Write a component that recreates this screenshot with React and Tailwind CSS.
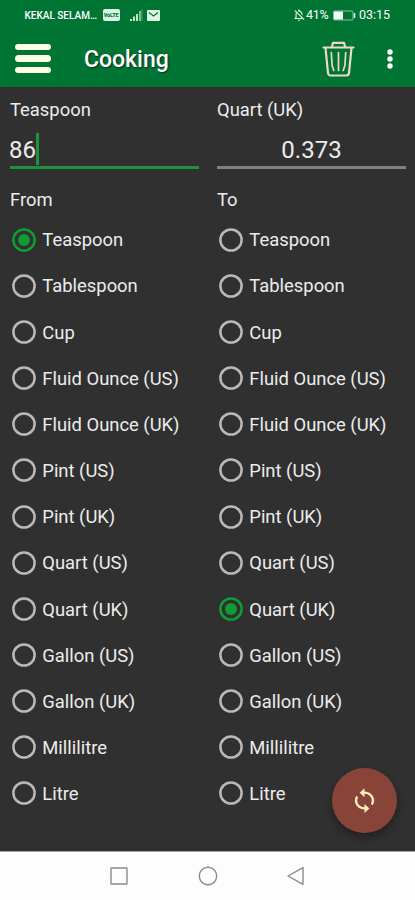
import { useState } from 'react';
import { MdSync, MdOutlineNotificationsOff } from 'react-icons/md';

const UNITS = [
  'Teaspoon',
  'Tablespoon',
  'Cup',
  'Fluid Ounce (US)',
  'Fluid Ounce (UK)',
  'Pint (US)',
  'Pint (UK)',
  'Quart (US)',
  'Quart (UK)',
  'Gallon (US)',
  'Gallon (UK)',
  'Millilitre',
  'Litre'
];

const StatusBar = () => (
  <div className="flex h-[30px] items-center justify-between pl-[24.5px] pr-[23px] text-white">
    <div className="flex items-center">
      <span className="w-[75px] whitespace-nowrap text-[10px] font-medium">KEKAL SELAM…</span>
      <span className="ml-[3px] flex h-[12px] w-[17px] items-center justify-center rounded-[2px] bg-[#d9f5e2] text-[5.5px] font-black tracking-[-0.2px] text-[#007433]">
        VoLTE
      </span>
      <svg className="ml-[10px] h-[12px] w-[13px]" viewBox="0 0 13 12">
        <path d="M0 10h2v2H0zM3 7.5h2V12H3zM6 5h2v7H6z" fill="#c3e6ce" />
        <path d="M9 2h2v10H9z" fill="#7fc096" />
        <path d="M11.5 0h1v12h-1z" fill="#4f9f6d" />
      </svg>
      <svg className="ml-[4px] h-[11px] w-[13px]" viewBox="0 0 13 11">
        <rect width="13" height="11" rx="1" fill="#dff7e6" />
        <path d="M2 2.5 6.5 6 11 2.5" fill="none" stroke="#007433" strokeWidth="1.3" />
      </svg>
    </div>
    <div className="flex items-center text-[12px]">
      <MdOutlineNotificationsOff className="h-[14px] w-[14px] text-[#d9f5e2]" />
      <span className="w-[24px] whitespace-nowrap text-[12.5px] tracking-[-0.3px]">41%</span>
      <svg className="ml-[3px] h-[11px] w-[23px]" viewBox="0 0 23 11">
        <rect x="0.5" y="1" width="19.5" height="9" rx="1" fill="none" stroke="#8bc8a0" />
        <rect x="1" y="1.5" width="9" height="8" fill="#f1fff4" />
        <path d="M21.5 3v5" stroke="#e5f9ea" strokeWidth="1.5" />
      </svg>
      <span className="ml-[3px] w-[33px] whitespace-nowrap text-[12.5px]">03:15</span>
    </div>
  </div>
);

const Toolbar = () => (
  <div className="flex h-[57px] items-center">
    <button className="ml-[15px] flex w-[36px] flex-col gap-[5px]">
      <span className="h-[6.5px] w-full rounded-full bg-[#ffffe4]" />
      <span className="h-[6.5px] w-full rounded-full bg-[#ffffe4]" />
      <span className="h-[6.5px] w-full rounded-full bg-[#ffffe4]" />
    </button>
    <h1 className="ml-[33px] flex-1 pt-[4px] text-[23px] font-medium text-white [text-shadow:1px_1px_2px_#0b3018]">
      Cooking
    </h1>
    <svg
      className="h-[36px] w-[33px]"
      viewBox="0 0 33 36"
      fill="none"
      stroke="#f0d6c6"
      strokeLinecap="round"
      strokeLinejoin="round"
    >
      <path d="M1.5 6.5h30" strokeWidth="2.2" />
      <path d="M10 5.5 11 1.8h11L23 5.5" strokeWidth="2.2" />
      <path d="M3.5 7 6 32q.3 2.5 2.8 2.5h15.4q2.5 0 2.8-2.5L29.5 7" strokeWidth="2.2" />
      <path d="M9.3 11.5l.8 13 1.7 5M16.5 11.5v18M23.7 11.5l-.8 13-1.7 5" strokeWidth="1.7" />
    </svg>
    <button className="ml-[32px] mr-[22px]">
      <svg className="h-[22px] w-[6px]" viewBox="0 0 6 22" fill="#ffffff">
        <circle cx="3" cy="4" r="2.7" />
        <circle cx="3" cy="11" r="2.7" />
        <circle cx="3" cy="18" r="2.7" />
      </svg>
    </button>
  </div>
);

const Radio = ({ label, checked, onSelect }) => (
  <button onClick={onSelect} className="flex h-[46.17px] w-full items-center text-left" role="radio" aria-checked={checked}>
    <svg
      className={checked ? 'ml-[1.5px] h-[24px] w-[24px] text-[#109c35]' : 'ml-[1.5px] h-[24px] w-[24px] text-[#b9b9b9]'}
      viewBox="0 0 24 24"
    >
      <circle cx="12" cy="12" r="10.6" fill="none" stroke="currentColor" strokeWidth="2.5" />
      {checked && <circle cx="12" cy="12" r="6" fill="currentColor" />}
    </svg>
    <span className="ml-[6.8px] whitespace-nowrap pt-[1px]">{label}</span>
  </button>
);

const UnitColumn = ({ title, selected, onSelect, children }) => (
  <div className="flex w-[189px] flex-col">
    <p className="mt-[9px] h-[28px] leading-[28px]">{selected}</p>
    {children}
    <p className="mt-[17px] h-[28px] leading-[28px]">{title}</p>
    <div className="mt-[2.5px]" role="radiogroup">
      {UNITS.map((unit) => (
        <Radio key={unit} label={unit} checked={unit === selected} onSelect={() => onSelect(unit)} />
      ))}
    </div>
  </div>
);

const NavBar = () => (
  <div className="flex h-[49px] items-center justify-center gap-[68.5px] border-t border-[#a5a5a5] bg-[#fdfdfd]">
    <svg className="h-[20px] w-[20px]" viewBox="0 0 20 20" fill="none" stroke="#8a8a8a" strokeWidth="1.4">
      <rect x="2" y="2" width="16" height="16" rx="0.5" />
    </svg>
    <svg className="h-[20px] w-[20px]" viewBox="0 0 20 20" fill="none" stroke="#8a8a8a" strokeWidth="1.4">
      <circle cx="10" cy="10" r="8.7" />
    </svg>
    <svg className="h-[20px] w-[20px]" viewBox="0 0 20 20" fill="none" stroke="#8a8a8a" strokeWidth="1.4" strokeLinejoin="round">
      <path d="M17 1.7v16.6L2 10z" />
    </svg>
  </div>
);

const App = () => {
  const [from, setFrom] = useState('Teaspoon');
  const [to, setTo] = useState('Quart (UK)');

  const swapUnits = () => {
    setFrom(to);
    setTo(from);
  };

  return (
    <div className="relative flex h-[900px] w-[415px] flex-col overflow-hidden bg-[#303030] font-['Roboto',sans-serif] text-[18.4px] text-[#ececec]">
      <header className="h-[87px] shrink-0 bg-[#007433]">
        <StatusBar />
        <Toolbar />
      </header>

      <main className="flex flex-1 gap-[18px] pl-[10px]">
        <UnitColumn title="From" selected={from} onSelect={setFrom}>
          <div className="flex h-[45px] items-center border-b-[3px] border-[#20923f] pt-[10px] text-[24px]">
            <span className="-ml-px">86</span>
            <span className="mb-[3px] h-[32px] w-[3px] shrink-0 bg-[#20923f]" />
          </div>
        </UnitColumn>
        <UnitColumn title="To" selected={to} onSelect={setTo}>
          <div className="flex h-[45px] items-center justify-center border-b-[3px] border-[#808080] pt-[10px] text-[24px]">
            0.373
          </div>
        </UnitColumn>
      </main>

      <NavBar />

      <button
        onClick={swapUnits}
        className="absolute left-[332px] top-[768px] flex h-[65px] w-[65px] items-center justify-center rounded-full bg-[#884439] shadow-[0_4px_8px_rgba(0,0,0,0.35)]"
      >
        <MdSync preserveAspectRatio="none" className="h-[27px] w-[29px] text-[#ffecb8]" />
      </button>
    </div>
  );
};

export default App;
